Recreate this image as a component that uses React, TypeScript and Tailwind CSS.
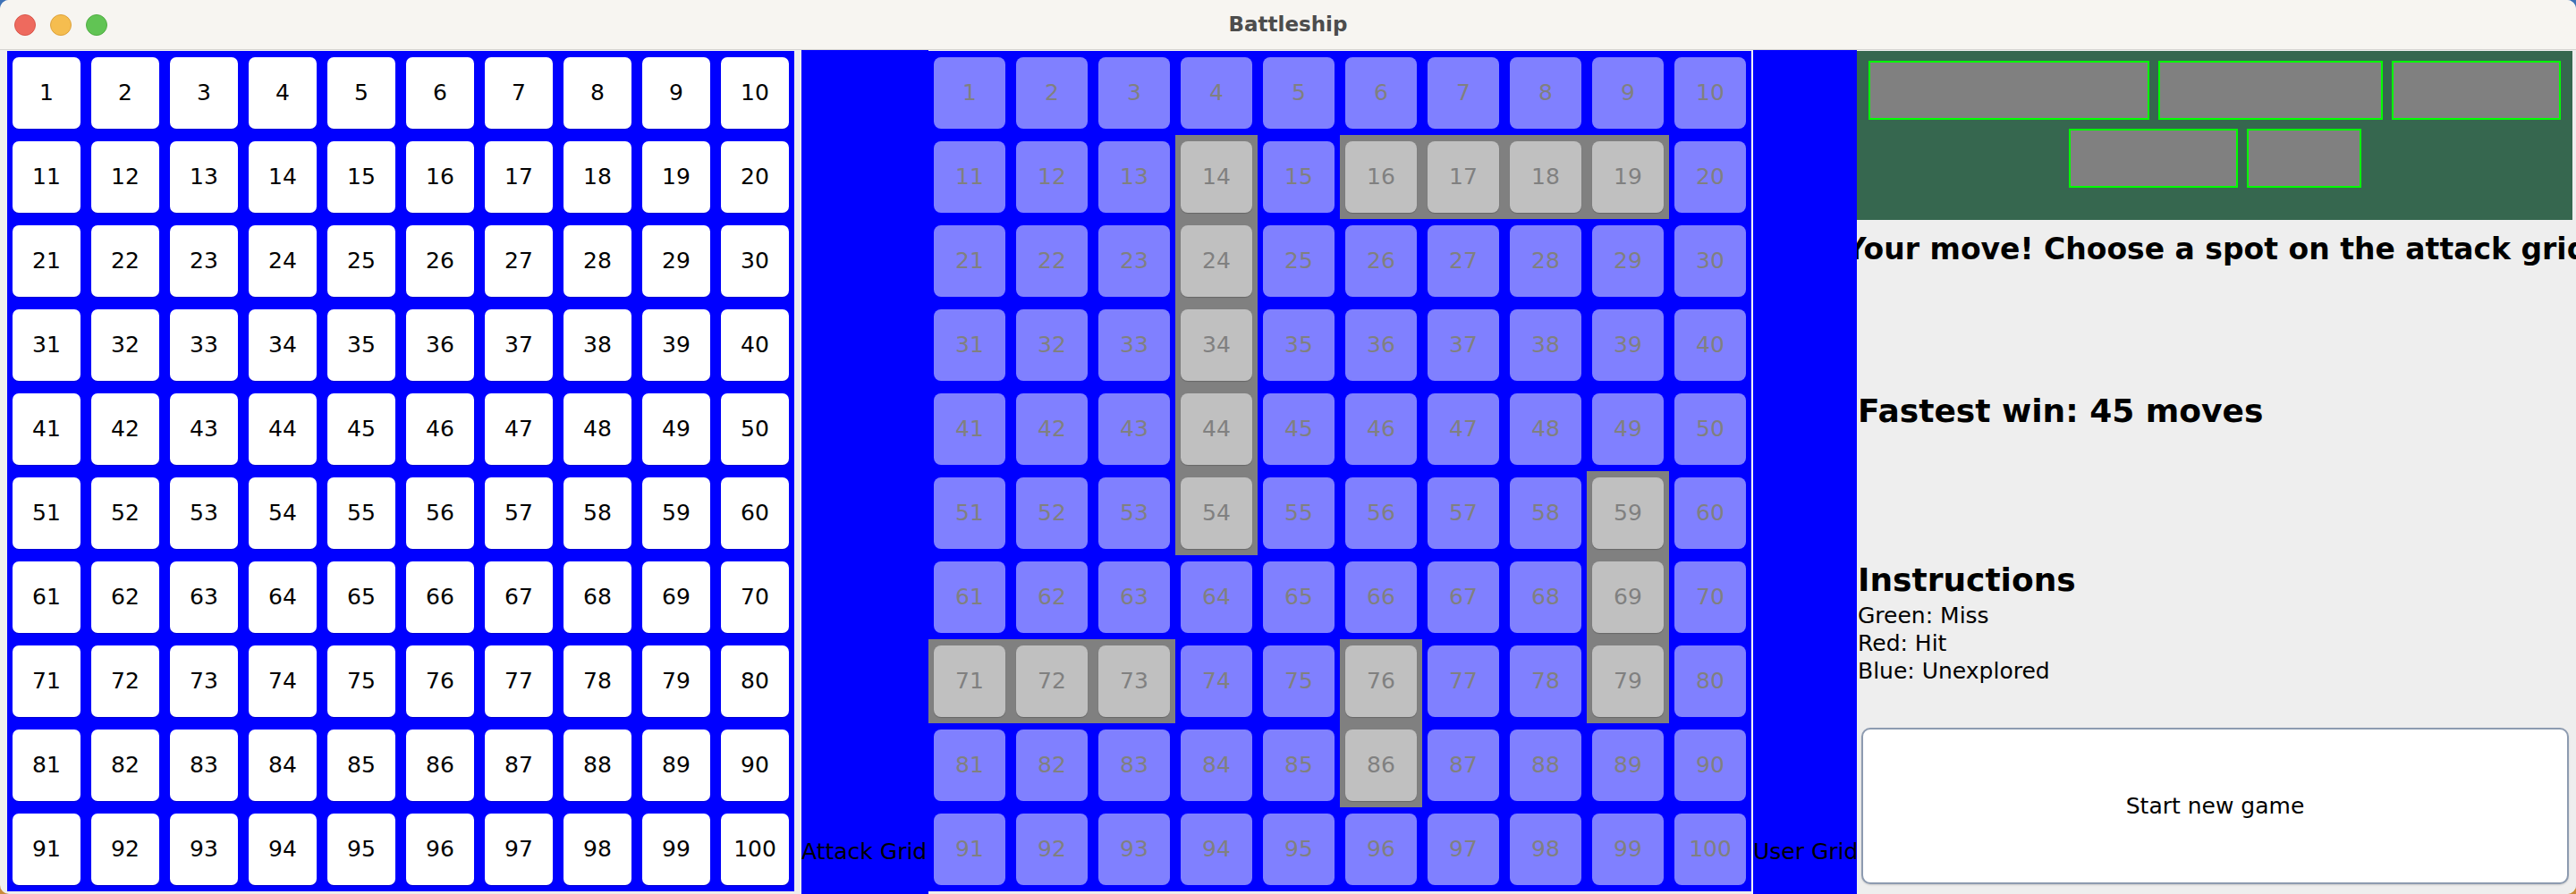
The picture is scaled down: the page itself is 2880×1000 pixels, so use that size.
import React from "react";

const ships = new Set([14, 24, 34, 44, 54, 16, 17, 18, 19, 59, 69, 79, 71, 72, 73, 76, 86]);
const nums = Array.from({ length: 100 }, (_, i) => i + 1);

function LeftGrid() {
  return (
    <div className="mt-px grid h-[940px] w-[880px] shrink-0 grid-cols-10 grid-rows-10 bg-[#0000ff]">
      {nums.map((n) => (
        <div key={n} className="px-[6px] py-[7px]">
          <div className="flex h-full w-full items-center justify-center rounded-[7px] bg-white text-[25px] text-black shadow-[0_1px_1px_rgba(0,0,0,0.18)]">
            {n}
          </div>
        </div>
      ))}
    </div>
  );
}

function MiddleGrid() {
  return (
    <div className="mt-px grid h-[940px] w-[920px] shrink-0 grid-cols-10 grid-rows-10 bg-[#0000ff]">
      {nums.map((n) => {
        const ship = ships.has(n);
        return (
          <div key={n} className={ship ? "bg-[#808080] px-[6px] py-[7px]" : "px-[6px] py-[7px]"}>
            <div
              className={
                ship
                  ? "flex h-full w-full items-center justify-center rounded-[8px] bg-[#c0c0c0] text-[25px] text-[#808080] shadow-[0_1px_1px_rgba(0,0,0,0.2)]"
                  : "flex h-full w-full items-center justify-center rounded-[8px] bg-[#8080ff] text-[25px] text-[#808080]"
              }
            >
              {n}
            </div>
          </div>
        );
      })}
    </div>
  );
}

function ShipBox({ w }: { w: string }) {
  return <div className={`h-[66px] border-2 border-[#00ff00] bg-[#808080] ${w}`} />;
}

function RightPanel() {
  return (
    <div className="flex min-w-0 flex-1 flex-col overflow-hidden bg-[#eeeeee]">
      <div className="mr-[4px] mt-px flex h-[189px] shrink-0 flex-col items-center gap-[10px] bg-[#36674f] pt-[11px]">
        <div className="flex gap-[10px]">
          <ShipBox w="w-[314px]" />
          <ShipBox w="w-[251px]" />
          <ShipBox w="w-[189px]" />
        </div>
        <div className="flex gap-[10px]">
          <ShipBox w="w-[189px]" />
          <ShipBox w="w-[128px]" />
        </div>
      </div>
      <div className="mt-[13px] flex h-[40px] shrink-0 justify-center overflow-hidden">
        <div className="shrink-0 whitespace-nowrap text-[33px] font-bold leading-[40px] text-black">
          Your move! Choose a spot on the attack grid
        </div>
      </div>
      <div className="mt-[139px] h-[44px] shrink-0 whitespace-nowrap pl-[1px] text-[36px] font-bold leading-[44px] text-black">
        Fastest win: 45 moves
      </div>
      <div className="mt-[145px] h-[44px] shrink-0 whitespace-nowrap pl-[1px] text-[36px] font-bold leading-[44px] text-black">
        Instructions
      </div>
      <div className="mt-[2px] flex shrink-0 flex-col pl-[1px] text-[25px] leading-[31px] text-black">
        <div>Green: Miss</div>
        <div>Red: Hit</div>
        <div>Blue: Unexplored</div>
      </div>
      <div className="ml-[5px] mr-[8px] mt-[48px] flex h-[175px] shrink-0 items-center justify-center rounded-[10px] border-2 border-[#8d9bb0] bg-white text-[25px] text-black shadow-[0_1px_2px_rgba(0,0,0,0.15)]">
        Start new game
      </div>
    </div>
  );
}

export default function App() {
  return (
    <div className="h-[1000px] w-[2880px] bg-gradient-to-b from-[#3f73b8] to-[#c98b3b] font-['DejaVu_Sans',sans-serif]">
      <div className="flex h-full w-full flex-col overflow-hidden rounded-[10px] bg-[#eeeeee]">
        <div className="relative flex h-[56px] shrink-0 items-center justify-center border-b border-[#d6d4d1] bg-[#f7f5f1]">
          <div className="absolute left-[16px] top-[16px] flex gap-[16px]">
            <div className="h-[24px] w-[24px] rounded-full border border-[#d9574c] bg-[#ee6a5e]" />
            <div className="h-[24px] w-[24px] rounded-full border border-[#dea33d] bg-[#f5bd4f]" />
            <div className="h-[24px] w-[24px] rounded-full border border-[#52ad45] bg-[#61c454]" />
          </div>
          <div className="text-[23px] font-bold text-[#4c4c4c]">Battleship</div>
        </div>
        <div className="flex min-h-0 flex-1">
          <div className="w-[8px] shrink-0" />
          <LeftGrid />
          <div className="w-[8px] shrink-0" />
          <div className="flex w-[142px] shrink-0 flex-col justify-end overflow-hidden bg-[#0000ff] pb-[32px]">
            <div className="whitespace-nowrap text-[25px] leading-[30px] text-black">Attack Grid</div>
          </div>
          <MiddleGrid />
          <div className="w-[2px] shrink-0 bg-[#f7f7f7]" />
          <div className="flex w-[116px] shrink-0 flex-col justify-end overflow-hidden bg-[#0000ff] pb-[32px]">
            <div className="whitespace-nowrap text-[25px] leading-[30px] text-black">User Grid</div>
          </div>
          <RightPanel />
        </div>
      </div>
    </div>
  );
}
